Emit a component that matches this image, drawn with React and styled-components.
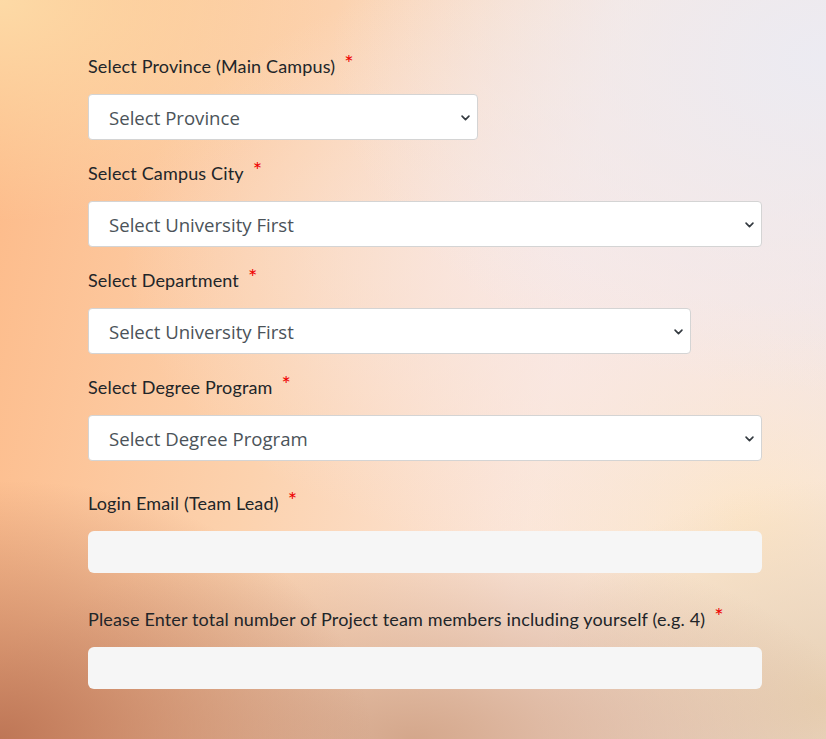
import styled, { createGlobalStyle } from 'styled-components';
import React from "react";

const GlobalStyle = createGlobalStyle`
    html, body {
        margin: 0;
        padding: 0;
    }
    body {
        font-family: 'Lato', 'Noto Sans', sans-serif;
    }
`

const Page = styled.div`
    width: 826px;
    height: 739px;
    box-sizing: border-box;
    overflow: hidden;
    padding: 53px 64px 0 88px;
    background:
        radial-gradient(ellipse 40% 30% at 0% 0%, rgba(253, 218, 166, 1) 0%, rgba(253, 218, 166, 0) 100%),
        radial-gradient(ellipse 60% 45% at 100% 8%, rgba(236, 235, 242, 1) 0%, rgba(236, 235, 242, 0) 100%),
        radial-gradient(ellipse 55% 40% at 70% 35%, rgba(248, 232, 230, 0.9) 0%, rgba(248, 232, 230, 0) 100%),
        radial-gradient(ellipse 45% 35% at 0% 100%, rgba(190, 118, 86, 1) 0%, rgba(190, 118, 86, 0) 100%),
        radial-gradient(ellipse 55% 28% at 50% 100%, rgba(210, 164, 136, 0.95) 0%, rgba(210, 164, 136, 0) 100%),
        radial-gradient(ellipse 35% 30% at 100% 95%, rgba(232, 208, 178, 1) 0%, rgba(232, 208, 178, 0) 100%),
        radial-gradient(ellipse 30% 30% at 90% 70%, rgba(253, 230, 200, 1) 0%, rgba(253, 230, 200, 0) 100%),
        linear-gradient(100deg, #fdba88 0%, #fcd2ae 35%, #fbe6da 65%, #f1e6e6 100%);
`

const Form = styled.form`
    display: flex;
    flex-direction: column;
`

const Field = styled.div`
    display: flex;
    flex-direction: column;
    margin-bottom: ${props => props.$gap || 20}px;
`

const Label = styled.label`
    display: flex;
    align-items: flex-start;
    font-size: 18px;
    line-height: 26px;
    letter-spacing: 0.15px;
    color: #212529;
    margin-bottom: ${props => props.$space || 15}px;
`

const Star = styled.span`
    color: #ee0000;
    margin-left: 9px;
    font-size: 22px;
    line-height: 20px;
`

const Select = styled.select`
    width: ${props => props.$width}px;
    height: 46px;
    box-sizing: border-box;
    padding: 0 14px 0 20px;
    font-family: 'Open Sans', 'Noto Sans', sans-serif;
    font-size: 18.6px;
    color: #4b5359;
    background-color: #ffffff;
    border: 1px solid #d4d4d4;
    border-radius: 4px;
    appearance: none;
    background-image: url("data:image/svg+xml,%3csvg xmlns='http://www.w3.org/2000/svg' viewBox='0 0 16 16'%3e%3cpath fill='none' stroke='%23343a40' stroke-linecap='round' stroke-linejoin='round' stroke-width='2.4' d='M3 6l5 5 5-5'/%3e%3c/svg%3e");
    background-repeat: no-repeat;
    background-position: right 6px center;
    background-size: 11px 11px;
    outline: none;
`

const Input = styled.input`
    width: 674px;
    height: 42px;
    box-sizing: border-box;
    border: none;
    border-radius: 6px;
    background: #f6f6f6;
    padding: 0 16px;
    font-family: 'Open Sans', sans-serif;
    font-size: 16px;
    outline: none;
`

const selects = [
    { label: "Select Province (Main Campus)", placeholder: "Select Province", width: 390 },
    { label: "Select Campus City", placeholder: "Select University First", width: 674 },
    { label: "Select Department", placeholder: "Select University First", width: 603 },
    { label: "Select Degree Program", placeholder: "Select Degree Program", width: 674 },
]

const App = () => {
    return(
        <>
        <GlobalStyle />
        <Page>
            <Form>
                {selects.map((item, index) =>
                    <Field key={`${index}-${item.label}`} $gap={index === 3 ? 29 : 20}>
                        <Label>{item.label}<Star>*</Star></Label>
                        <Select $width={item.width} defaultValue="">
                            <option value="">{item.placeholder}</option>
                        </Select>
                    </Field>
                )}
                <Field $gap={33}>
                    <Label>Login Email (Team Lead)<Star>*</Star></Label>
                    <Input type="email" />
                </Field>
                <Field>
                    <Label>Please Enter total number of Project team members including yourself (e.g. 4)<Star>*</Star></Label>
                    <Input type="number" />
                </Field>
            </Form>
        </Page>
        </>
    );
};
export default App
